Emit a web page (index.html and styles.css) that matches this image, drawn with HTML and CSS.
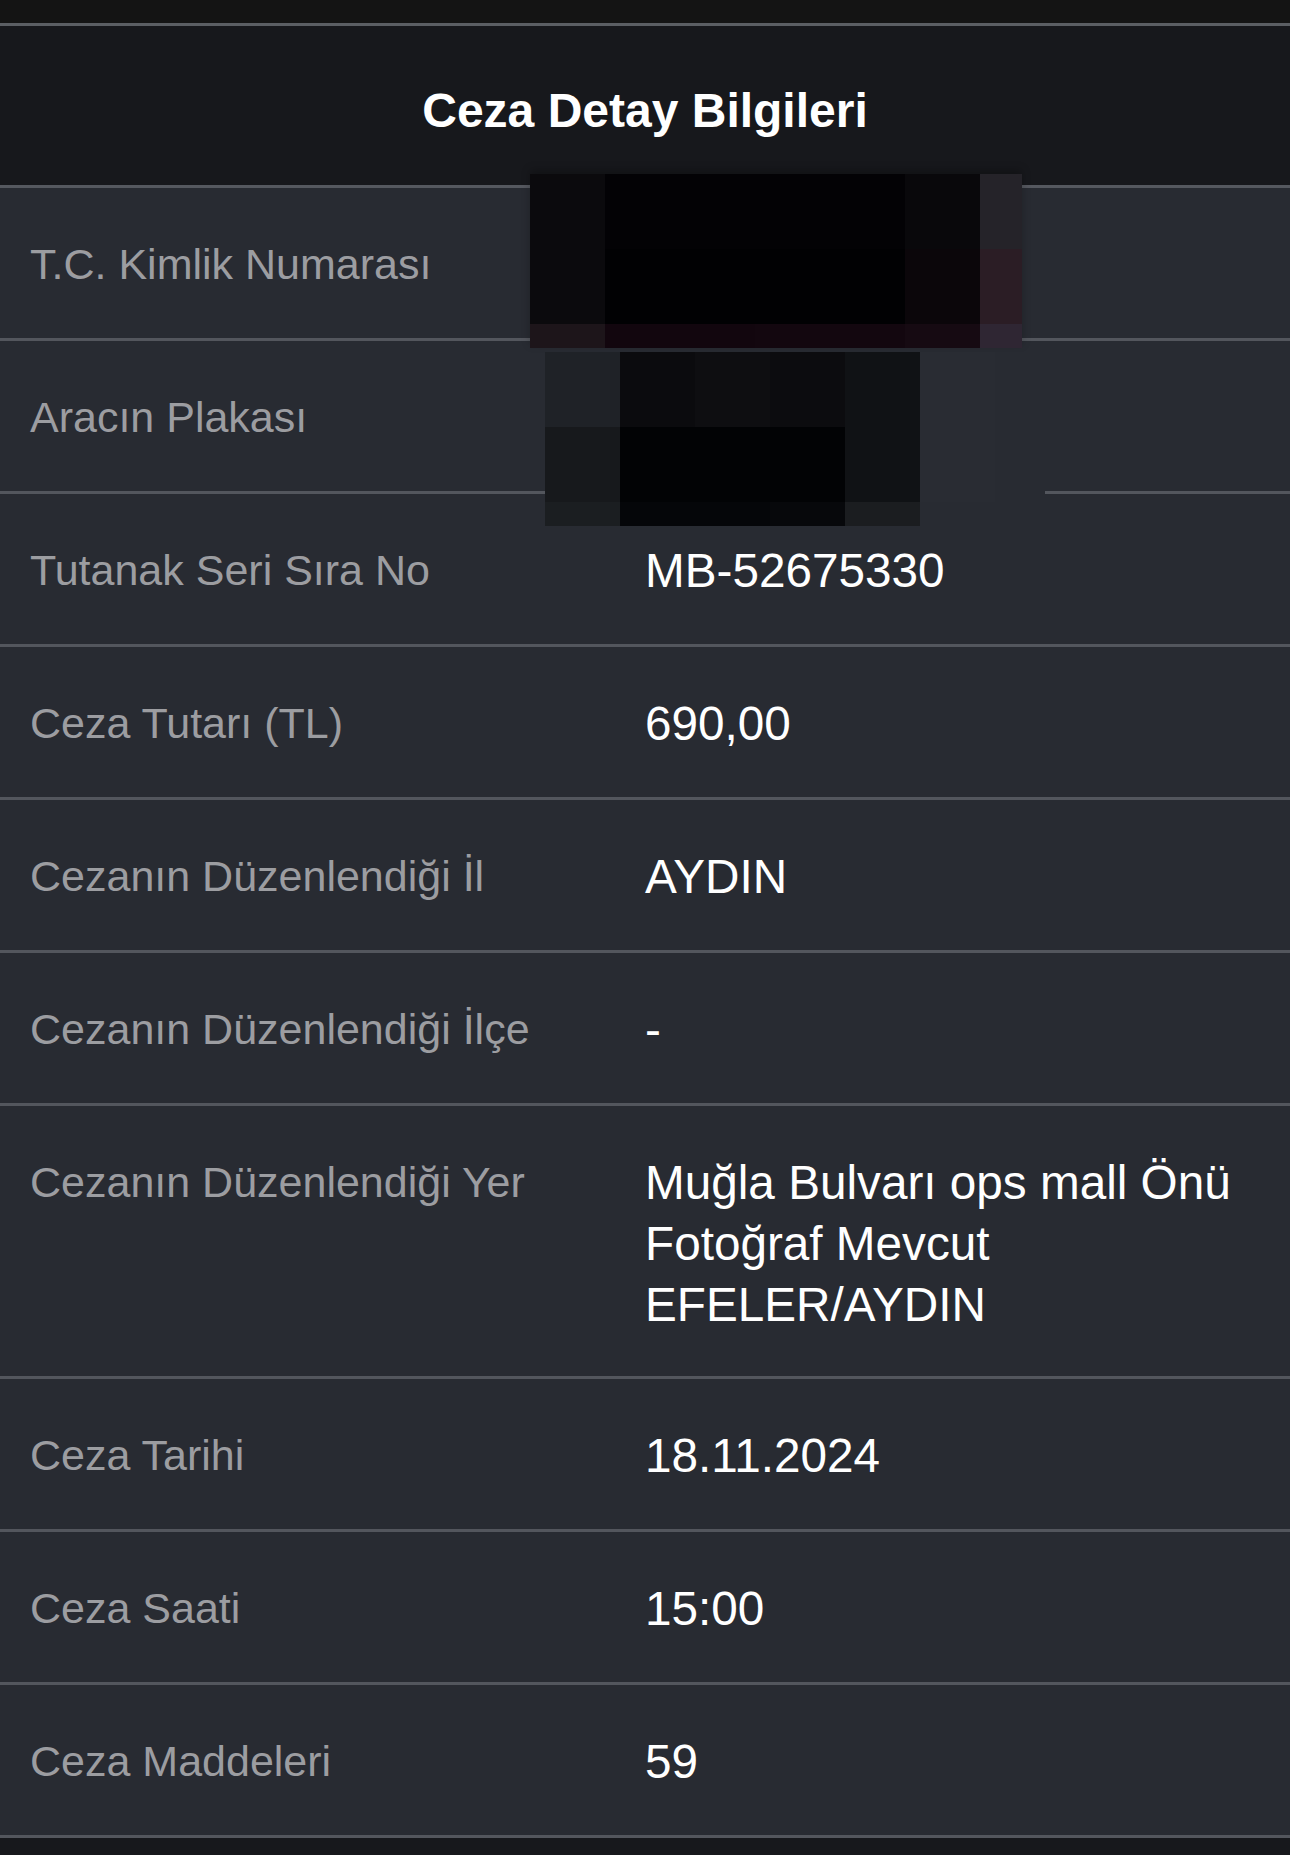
FILE: index.html
```html
<!DOCTYPE html>
<html lang="tr">
<head>
<meta charset="utf-8">
<title>Ceza Detay Bilgileri</title>
<link rel="stylesheet" href="styles.css">
</head>
<body>
<div class="page">
  <div class="topbar"></div>
  <header class="header"><h1 class="title">Ceza Detay Bilgileri</h1></header>
  <div class="list">
    <div class="row"><div class="label">T.C. Kimlik Numarası</div><div class="value"></div></div>
    <div class="row"><div class="label">Aracın Plakası</div><div class="value"></div></div>
    <div class="row"><div class="label">Tutanak Seri Sıra No</div><div class="value">MB-52675330</div></div>
    <div class="row"><div class="label">Ceza Tutarı (TL)</div><div class="value">690,00</div></div>
    <div class="row"><div class="label">Cezanın Düzenlendiği İl</div><div class="value">AYDIN</div></div>
    <div class="row"><div class="label">Cezanın Düzenlendiği İlçe</div><div class="value">-</div></div>
    <div class="row"><div class="label">Cezanın Düzenlendiği Yer</div><div class="value">Muğla Bulvarı ops mall Önü Fotoğraf Mevcut EFELER/AYDIN</div></div>
    <div class="row"><div class="label">Ceza Tarihi</div><div class="value">18.11.2024</div></div>
    <div class="row"><div class="label">Ceza Saati</div><div class="value">15:00</div></div>
    <div class="row"><div class="label">Ceza Maddeleri</div><div class="value">59</div></div>
  </div>

  <div class="redact redact-one">
    <div class="p1"></div><div class="p2"></div><div class="p2"></div><div class="p2"></div><div class="p2"></div><div class="p4"></div><div class="p5"></div>
    <div class="p1"></div><div class="p3"></div><div class="p3"></div><div class="p3"></div><div class="p3"></div><div class="pa"></div><div class="p6"></div>
    <div class="p7"></div><div class="p8"></div><div class="p8"></div><div class="pb"></div><div class="pb"></div><div class="pc"></div><div class="p9"></div>
  </div>
  <div class="redact redact-two">
    <div class="q1"></div><div class="q0"></div><div class="qa"></div><div class="q2"></div><div class="q3"></div><div class="q4"></div><div class="qb"></div>
    <div class="q5"></div><div class="q6"></div><div class="q6"></div><div class="q6"></div><div class="q3"></div><div class="q4"></div><div class="qb"></div>
    <div class="q7"></div><div class="q8"></div><div class="q8"></div><div class="qc"></div><div class="q9"></div><div></div><div></div>
  </div>
</div>
</body>
</html>
```

FILE: styles.css
```css
* { box-sizing: border-box; }

html, body {
  margin: 0;
  padding: 0;
  background: #17181c;
}

.page {
  position: relative;
  width: 1290px;
  min-height: 1855px;
  background: #17181c;
  font-family: "Liberation Sans", Arial, Helvetica, sans-serif;
}

.topbar {
  height: 26px;
  background: #141414;
  border-bottom: 3px solid #5b5e63;
}

.header {
  height: 162px;
  display: flex;
  align-items: center;
  justify-content: center;
  padding-top: 10px;
  background: #17181c;
  border-bottom: 3px solid #55585f;
}

.title {
  margin: 0;
  font-size: 48px;
  font-weight: 700;
  color: #ffffff;
  line-height: 1.2;
}

.list {
  background: #282b32;
}

.row {
  display: grid;
  grid-template-columns: 615px 1fr;
  padding: 46px 40px 41px 30px;
  line-height: 61px;
  border-bottom: 3px solid #53565d;
  min-height: 153px;
}

.label {
  font-size: 43px;
  color: #9c9da1;
  white-space: nowrap;
}

.value {
  font-size: 47.7px;
  color: #ffffff;
}

/* redaction overlays */
.redact {
  position: absolute;
  display: grid;
}

.redact-one {
  left: 530px;
  top: 174px;
  grid-template-columns: 75px 75px 75px 75px 75px 75px 42px;
  grid-template-rows: 75px 75px 24px;
  box-shadow: 0 -4px 8px rgba(0, 0, 0, 0.25);
}

.redact-two {
  left: 545px;
  top: 352px;
  grid-template-columns: 75px 75px 75px 75px 75px 75px 50px;
  grid-template-rows: 75px 75px 24px;
}

.p1 { background: #0b0a0d; }
.p2 { background: #030205; }
.p3 { background: #010103; }
.p4 { background: #09080b; }
.p5 { background: #252329; }
.p6 { background: #2b1d25; }
.p7 { background: #1d151a; }
.p8 { background: #12060e; }
.p9 { background: #2f2633; }
.pa { background: #0b060a; }
.pb { background: #13070f; }
.pc { background: #160a12; }

.q0 { background: #0b0b0e; }
.q1 { background: #1f2227; }
.q2 { background: #0c0c0f; }
.q3 { background: #101215; }
.q4 { background: #292c33; }
.q5 { background: #17191c; }
.q6 { background: #020305; }
.q7 { background: #1b1e21; }
.q8 { background: #050609; }
.q9 { background: #1b1d20; }
.qa { background: #0e0e11; }
.qb { background: #282b32; }
.qc { background: #07080b; }
```
